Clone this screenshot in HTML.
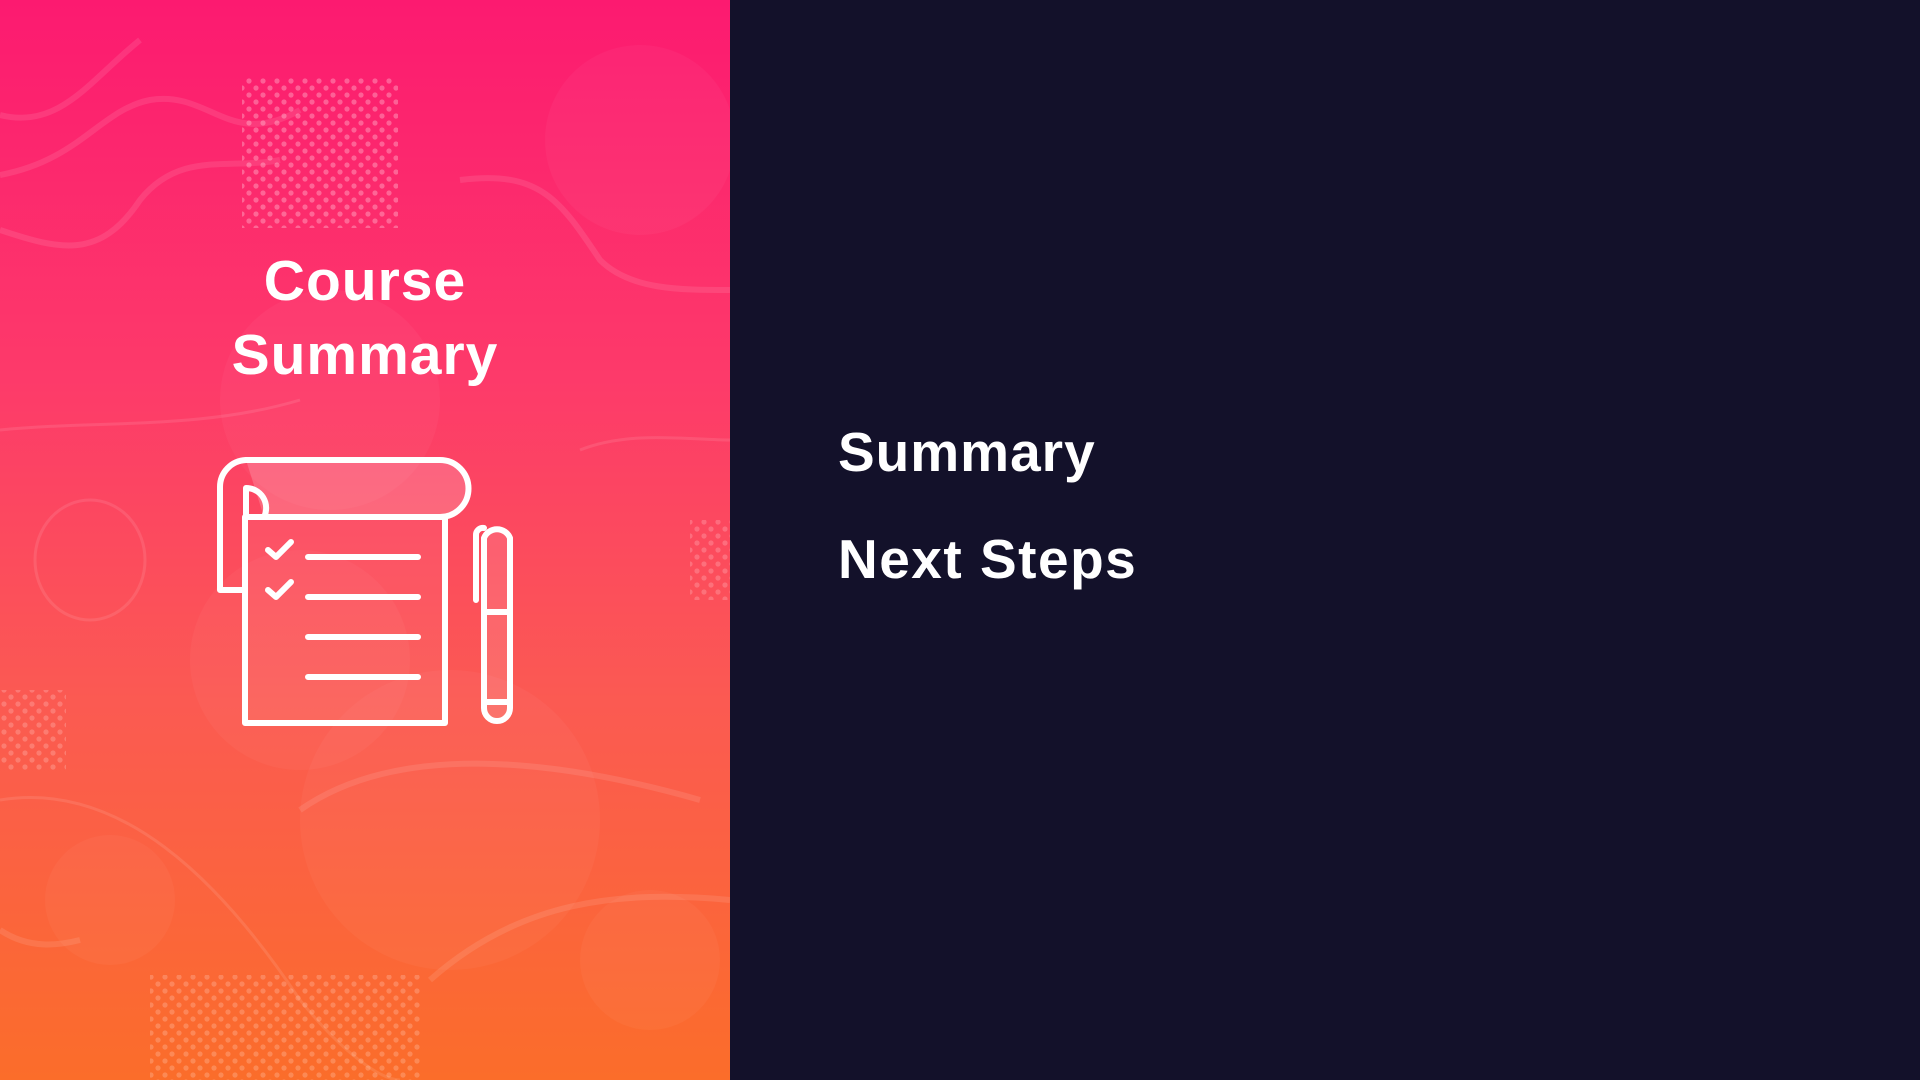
<!DOCTYPE html>
<html><head><meta charset="utf-8"><style>
html,body{margin:0;padding:0;width:1920px;height:1080px;overflow:hidden;background:#13112a;font-family:"Liberation Sans",sans-serif}
#left{position:absolute;left:0;top:0;width:730px;height:1080px;background:linear-gradient(180deg,#fc1a70 0%,#fd3a6a 35%,#fb5a52 65%,#fb6d2a 100%);overflow:hidden}
.t{position:absolute;color:#fff;font-weight:bold;white-space:nowrap}
</style></head><body>
<div id="left">
<svg width="730" height="1080" style="position:absolute;left:0;top:0">
<defs><pattern id="dots" width="14" height="14" patternUnits="userSpaceOnUse"><circle cx="4" cy="4" r="2.6" fill="#fff" fill-opacity=".28"/><circle cx="11" cy="11" r="2.6" fill="#fff" fill-opacity=".28"/></pattern></defs>
<rect x="242" y="78" width="156" height="150" fill="url(#dots)"/>
<rect x="150" y="975" width="270" height="105" fill="url(#dots)" opacity=".7"/>
<rect x="0" y="690" width="66" height="80" fill="url(#dots)" opacity=".7"/>
<rect x="690" y="520" width="40" height="80" fill="url(#dots)" opacity=".7"/>
<g fill="#fff" fill-opacity=".035"><circle cx="640" cy="140" r="95"/><circle cx="330" cy="400" r="110"/><circle cx="300" cy="660" r="110"/><circle cx="110" cy="900" r="65"/><circle cx="650" cy="960" r="70"/><circle cx="450" cy="820" r="150"/></g>
<g fill="none" stroke="#fff" stroke-opacity=".1" stroke-width="6"><path d="M0 115 C60 130 90 80 140 40"/><path d="M0 175 C80 160 100 110 150 100 C210 90 230 150 300 110"/><path d="M0 230 C60 250 100 260 140 200 C180 150 230 170 280 160"/><path d="M460 180 C540 170 560 200 600 260 C630 290 680 290 730 290"/><path d="M300 810 C400 740 560 760 700 800"/><path d="M430 980 C520 900 620 890 730 900"/><path d="M0 930 C30 950 60 945 80 940"/></g>
<g fill="none" stroke="#fff" stroke-opacity=".1" stroke-width="3"><ellipse cx="90" cy="560" rx="55" ry="60"/><path d="M0 800 C120 780 220 880 300 1000 C340 1050 380 1080 400 1080"/><path d="M0 430 C100 420 200 430 300 400"/><path d="M580 450 C630 430 690 440 730 440"/></g>
</svg>
<div class="t" style="left:0;width:730px;text-align:center;top:244px;font-size:57px;line-height:74px;letter-spacing:1px">Course<br>Summary</div>
<svg width="730" height="1080" style="position:absolute;left:0;top:0" fill="none" stroke="#fff" stroke-width="6" stroke-linecap="round" stroke-linejoin="round">
<path d="M245 517 L445 517 L445 723 L245 723 Z" fill="#fff" fill-opacity=".05"/>
<path d="M246 460 L440 460 A28 28 0 0 1 440 517 L264 517" fill="#fff" fill-opacity=".18"/>
<path d="M246 460 A27 27 0 0 0 220 487 L220 590 L245 590"/>
<path d="M264 517 A20 20 0 0 0 246 488 L246 517"/>
<path d="M308 557 H418 M308 597 H418 M308 637 H418 M308 677 H418"/>
<path d="M268 550 L276 557 L291 542 M268 590 L276 597 L291 582"/>
<path d="M476 600 L476 535 A7 7 0 0 1 484 528"/>
<path d="M484 538 A14 14 0 0 1 510 538 L510 708 A13 13 0 0 1 484 708 Z" fill="#fff" fill-opacity=".12"/>
<path d="M484 612 H510 M484 702 H510"/>
</svg>
</div>
<div class="t" style="left:838px;top:417px;font-size:55px;line-height:70px;letter-spacing:1px">Summary</div>
<div class="t" style="left:838px;top:524px;font-size:55px;line-height:70px;letter-spacing:1.5px">Next Steps</div>
</body></html>
